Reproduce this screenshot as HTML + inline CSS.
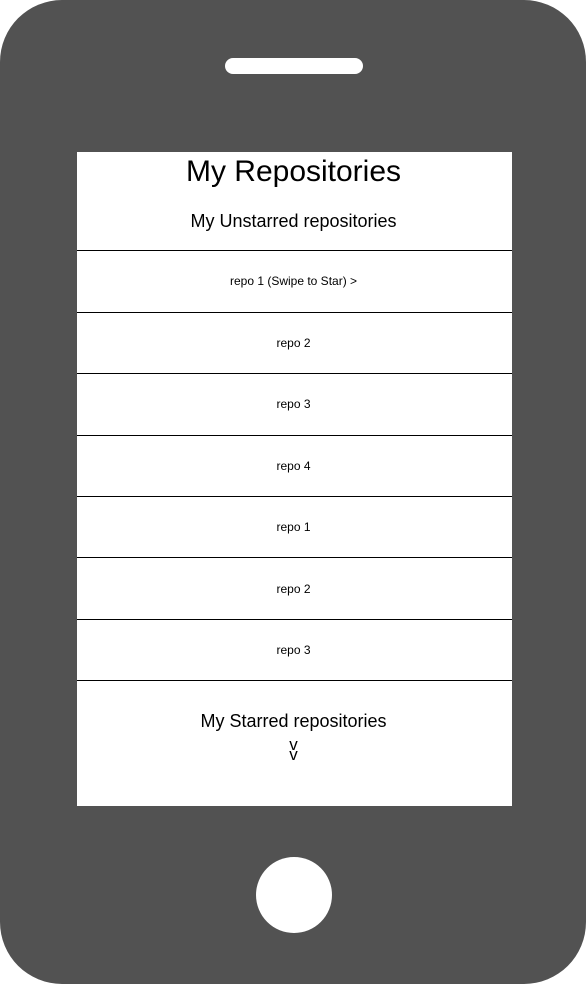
<!DOCTYPE html>
<html><head><style>
body{margin:0;width:586px;height:984px;background:#fff;position:relative;overflow:hidden;font-family:"Liberation Sans",Arial,sans-serif}
.phone{position:absolute;left:0;top:0;width:586px;height:984px;background:#525252;border-radius:62px}
.spk{position:absolute;left:225px;top:58px;width:138px;height:16px;background:#fff;border-radius:8px}
.home{position:absolute;left:256px;top:857px;width:76px;height:76px;background:#fff;border-radius:50%}
.scr{position:absolute;left:77px;top:152px;width:435px;height:654px;background:#fff}
.t{position:absolute;left:-1px;width:435px;text-align:center;color:#000}
.l{position:absolute;left:0;width:435px;height:1px;background:#000}
</style></head><body>
<div class="phone"></div>
<div class="spk"></div>
<div class="home"></div>
<div class="scr">
<div class="t" style="top:2px;font-size:30px;line-height:36px">My Repositories</div>
<div class="t" style="top:58px;font-size:18px;line-height:22px">My Unstarred repositories</div>
<div class="l" style="top:98px"></div>
<div class="t" style="top:122px;font-size:12px;line-height:14px">repo 1 (Swipe to Star) &gt;</div>
<div class="l" style="top:160px"></div>
<div class="t" style="top:184px;font-size:12px;line-height:14px">repo 2</div>
<div class="l" style="top:221px"></div>
<div class="t" style="top:245px;font-size:12px;line-height:14px">repo 3</div>
<div class="l" style="top:283px"></div>
<div class="t" style="top:307px;font-size:12px;line-height:14px">repo 4</div>
<div class="l" style="top:344px"></div>
<div class="t" style="top:368px;font-size:12px;line-height:14px">repo 1</div>
<div class="l" style="top:405px"></div>
<div class="t" style="top:430px;font-size:12px;line-height:14px">repo 2</div>
<div class="l" style="top:467px"></div>
<div class="t" style="top:491px;font-size:12px;line-height:14px">repo 3</div>
<div class="l" style="top:528px"></div>
<div class="t" style="top:558px;font-size:18px;line-height:22px">My Starred repositories</div>
<div class="t" style="top:588px;font-size:17px;line-height:10px">v<br>v</div>
</div>
</body></html>
